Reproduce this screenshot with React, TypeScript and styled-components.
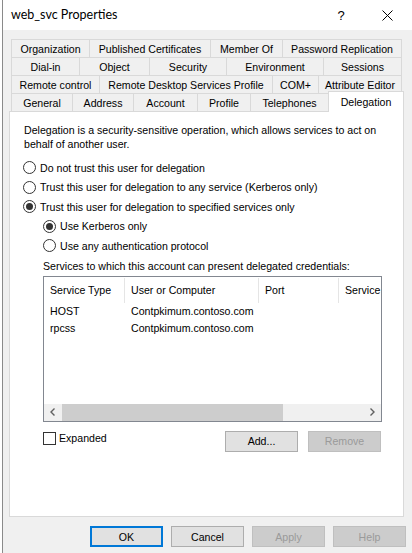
import styled, { createGlobalStyle } from "styled-components";

const GlobalStyle = createGlobalStyle`
  html, body {
    margin: 0;
    padding: 0;
    background: #ffffff;
  }
  body {
    font-family: "Liberation Sans", Arial, sans-serif;
    font-size: 10.6px;
    color: #000;
  }
`;

const tabRows: { label: string; w: number; active?: boolean }[][] = [
  [
    { label: "Organization", w: 79 },
    { label: "Published Certificates", w: 122 },
    { label: "Member Of", w: 73 },
    { label: "Password Replication", w: 120 },
  ],
  [
    { label: "Dial-in", w: 69 },
    { label: "Object", w: 71 },
    { label: "Security", w: 78 },
    { label: "Environment", w: 98 },
    { label: "Sessions", w: 79 },
  ],
  [
    { label: "Remote control", w: 89 },
    { label: "Remote Desktop Services Profile", w: 174 },
    { label: "COM+", w: 47 },
    { label: "Attribute Editor", w: 84 },
  ],
  [
    { label: "General", w: 62 },
    { label: "Address", w: 62 },
    { label: "Account", w: 65 },
    { label: "Profile", w: 54 },
    { label: "Telephones", w: 79 },
    { label: "Delegation", w: 76, active: true },
  ],
];

const services = [
  { type: "HOST", host: "Contpkimum.contoso.com" },
  { type: "rpcss", host: "Contpkimum.contoso.com" },
];

const App = () => (
  <>
    <GlobalStyle />
    <Window>
      <TitleBar>
        <TitleText>web_svc Properties</TitleText>
        <CaptionButton>?</CaptionButton>
        <CaptionButton>
          <svg width="11" height="11" viewBox="0 0 11 11">
            <path d="M0.5 0.5 L10.5 10.5 M10.5 0.5 L0.5 10.5" stroke="#000" strokeWidth="1" />
          </svg>
        </CaptionButton>
      </TitleBar>

      <Body>
        <TabStrip>
          {tabRows.map((row, i) => (
            <TabRow key={i}>
              {row.map((t) => (
                <Tab key={t.label} $w={t.w} $active={t.active}>
                  {t.label}
                </Tab>
              ))}
            </TabRow>
          ))}
        </TabStrip>

        <Panel>
          <Description>
            Delegation is a security-sensitive operation, which allows services to act on behalf of another user.
          </Description>

          <Options>
            <RadioRow>
              <Radio />
              Do not trust this user for delegation
            </RadioRow>
            <RadioRow>
              <Radio />
              Trust this user for delegation to any service (Kerberos only)
            </RadioRow>
            <RadioRow>
              <Radio $checked />
              Trust this user for delegation to specified services only
            </RadioRow>
            <RadioRow $indent>
              <Radio $checked />
              Use Kerberos only
            </RadioRow>
            <RadioRow $indent>
              <Radio />
              Use any authentication protocol
            </RadioRow>
          </Options>

          <Services>
            <ServicesLabel>Services to which this account can present delegated credentials:</ServicesLabel>
            <ListView>
              <ListHeader>
                <HeaderCell $w={81}>Service Type</HeaderCell>
                <HeaderCell $w={134}>User or Computer</HeaderCell>
                <HeaderCell $w={80}>Port</HeaderCell>
                <HeaderCell $w={80}>Service</HeaderCell>
              </ListHeader>
              <ListBody>
                {services.map((s) => (
                  <ListRow key={s.type}>
                    <Cell $w={81}>{s.type}</Cell>
                    <Cell $w={134}>{s.host}</Cell>
                  </ListRow>
                ))}
              </ListBody>
              <HScroll>
                <ScrollArrow>
                  <svg width="5" height="8" viewBox="0 0 5 8">
                    <path d="M4.5 0.5 L1 4 L4.5 7.5" fill="none" stroke="#606060" strokeWidth="1.4" />
                  </svg>
                </ScrollArrow>
                <ScrollTrack>
                  <ScrollThumb />
                </ScrollTrack>
                <ScrollArrow>
                  <svg width="5" height="8" viewBox="0 0 5 8">
                    <path d="M0.5 0.5 L4 4 L0.5 7.5" fill="none" stroke="#606060" strokeWidth="1.4" />
                  </svg>
                </ScrollArrow>
              </HScroll>
            </ListView>

            <ListActions>
              <CheckRow>
                <CheckBox />
                Expanded
              </CheckRow>
              <ButtonGroup>
                <Button>Add...</Button>
                <Button disabled>Remove</Button>
              </ButtonGroup>
            </ListActions>
          </Services>
        </Panel>

        <Footer>
          <Button $default>OK</Button>
          <Button>Cancel</Button>
          <Button disabled>Apply</Button>
          <Button disabled>Help</Button>
        </Footer>
      </Body>
    </Window>
  </>
);

export default App;

const Window = styled.div`
  margin-left: 2px;
  width: 410px;
  height: 553px;
  box-sizing: border-box;
  border-left: 1px solid #8a8a8a;
  background: #f0f0f0;
  display: flex;
  flex-direction: column;
`;

const TitleBar = styled.div`
  height: 30px;
  flex-shrink: 0;
  background: #ffffff;
  display: flex;
  align-items: center;
  padding-left: 8px;
  padding-right: 2px;
`;

const TitleText = styled.div`
  flex: 1;
  font-family: Lato, "Open Sans", sans-serif;
  font-size: 12.5px;
  padding-bottom: 1px;
`;

const CaptionButton = styled.div`
  width: 46px;
  height: 30px;
  display: flex;
  align-items: center;
  justify-content: center;
  font-family: "Liberation Sans", Arial, sans-serif;
  font-size: 13px;

  &:first-of-type {
    padding-left: 4px;
  }
`;

const Body = styled.div`
  flex: 1;
  padding: 9px 6px 0 6px;
  display: flex;
  flex-direction: column;
`;

const TabStrip = styled.div`
  margin-left: 2px;
  display: flex;
  flex-direction: column;
  position: relative;
  z-index: 2;
`;

const TabRow = styled.div`
  display: flex;
  align-items: flex-start;
  height: 18px;
`;

const Tab = styled.div<{ $w: number; $active?: boolean }>`
  box-sizing: border-box;
  width: ${(p) => p.$w}px;
  height: ${(p) => (p.$active ? 21 : 18)}px;
  margin-top: ${(p) => (p.$active ? -2 : 0)}px;
  margin-left: -1px;
  border: 1px solid #d9d9d9;
  border-bottom: none;
  background: ${(p) => (p.$active ? "#ffffff" : "#f0f0f0")};
  display: flex;
  align-items: center;
  justify-content: center;
  white-space: nowrap;
  position: relative;

  &:first-child {
    margin-left: 0;
  }
`;

const Panel = styled.div`
  box-sizing: border-box;
  width: 395px;
  height: 406px;
  background: #ffffff;
  border: 1px solid #d9d9d9;
  padding: 11px 12px 0 13px;
  display: flex;
  flex-direction: column;
`;

const Description = styled.p`
  margin: 0;
  line-height: 14px;
  max-width: 362px;
  padding-left: 1px;
`;

const Options = styled.div`
  margin-top: 7px;
  display: flex;
  flex-direction: column;
`;

const RadioRow = styled.label<{ $indent?: boolean }>`
  height: 19.5px;
  display: flex;
  align-items: center;
  gap: 4px;
  padding-left: ${(p) => (p.$indent ? 20 : 0)}px;
  white-space: nowrap;
`;

const Radio = styled.span<{ $checked?: boolean }>`
  box-sizing: border-box;
  width: 13px;
  height: 13px;
  border-radius: 50%;
  border: 1px solid #333333;
  background: #ffffff;
  display: flex;
  align-items: center;
  justify-content: center;

  &::after {
    content: "";
    display: ${(p) => (p.$checked ? "block" : "none")};
    width: 7px;
    height: 7px;
    border-radius: 50%;
    background: #333333;
  }
`;

const Services = styled.div`
  margin-left: 20px;
  width: 339px;
  display: flex;
  flex-direction: column;
`;

const ServicesLabel = styled.div`
  margin-top: 3px;
  line-height: 14px;
  white-space: nowrap;
`;

const ListView = styled.div`
  margin-top: 3px;
  box-sizing: border-box;
  height: 146px;
  border: 1px solid #828790;
  display: flex;
  flex-direction: column;
  overflow: hidden;
`;

const ListHeader = styled.div`
  height: 25px;
  flex-shrink: 0;
  display: flex;
  align-items: stretch;
  padding-top: 1px;
`;

const HeaderCell = styled.div<{ $w: number }>`
  box-sizing: border-box;
  flex: 0 0 ${(p) => p.$w}px;
  padding-left: 6px;
  border-right: 1px solid #e5e5e5;
  display: flex;
  align-items: center;
  white-space: nowrap;
  overflow: hidden;
`;

const ListBody = styled.div`
  flex: 1;
  display: flex;
  flex-direction: column;
`;

const ListRow = styled.div`
  height: 17px;
  display: flex;
  align-items: center;
`;

const Cell = styled.div<{ $w: number }>`
  box-sizing: border-box;
  flex: 0 0 ${(p) => p.$w}px;
  padding-left: 6px;
  white-space: nowrap;
`;

const HScroll = styled.div`
  height: 17px;
  flex-shrink: 0;
  background: #f0f0f0;
  display: flex;
`;

const ScrollArrow = styled.div`
  width: 17px;
  display: flex;
  align-items: center;
  justify-content: center;
`;

const ScrollTrack = styled.div`
  flex: 1;
  padding-left: 1px;
  display: flex;
`;

const ScrollThumb = styled.div`
  width: 221px;
  background: #cdcdcd;
`;

const ListActions = styled.div`
  margin-top: 9px;
  display: flex;
  justify-content: space-between;
  align-items: flex-start;
`;

const CheckRow = styled.label`
  display: flex;
  align-items: center;
  gap: 3px;
  margin-top: 1px;
  height: 13px;
`;

const CheckBox = styled.span`
  box-sizing: border-box;
  width: 13px;
  height: 13px;
  border: 1px solid #333333;
  background: #ffffff;
`;

const ButtonGroup = styled.div`
  display: flex;
  gap: 10px;
  margin-right: 1px;
`;

const Button = styled.button<{ $default?: boolean }>`
  box-sizing: border-box;
  width: 73px;
  height: 21px;
  padding: 0;
  margin: 0;
  font-family: "Liberation Sans", Arial, sans-serif;
  font-size: 10.6px;
  color: #000;
  background: #e1e1e1;
  border: ${(p) => (p.$default ? "2px solid #0078d7" : "1px solid #adadad")};

  &:disabled {
    background: #cccccc;
    border-color: #bfbfbf;
    color: #9a9a9a;
  }
`;

const Footer = styled.div`
  margin-top: 9px;
  display: flex;
  justify-content: flex-end;
  gap: 8px;
`;
